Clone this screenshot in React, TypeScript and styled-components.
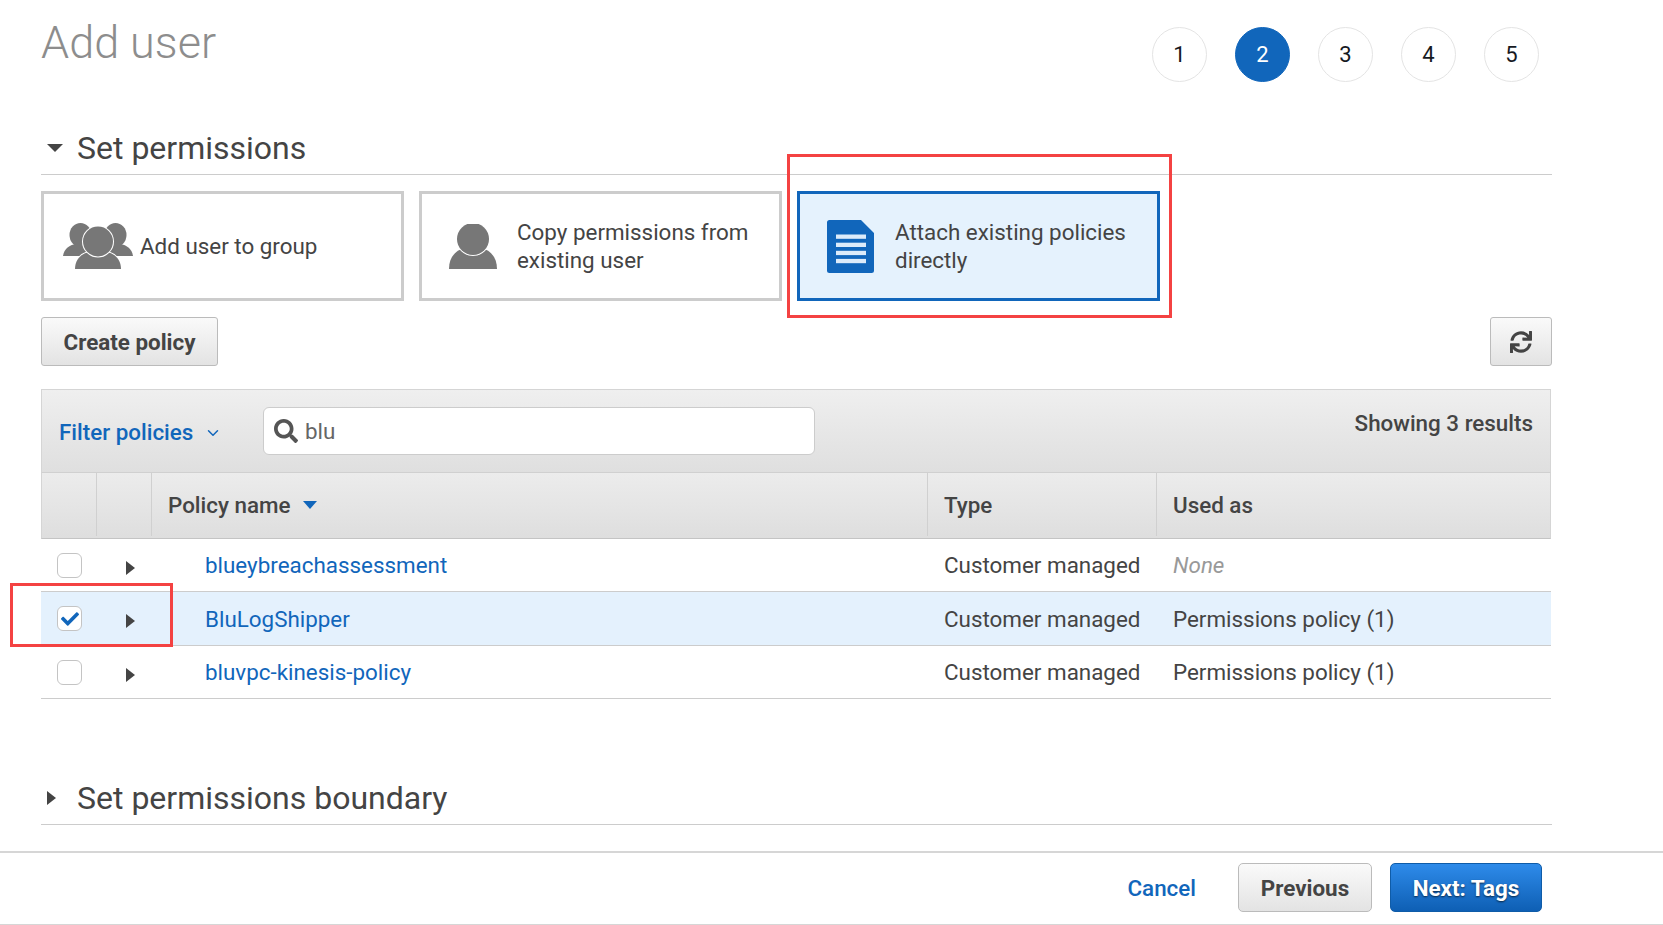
import React from "react";
import styled, { createGlobalStyle } from "styled-components";
import { FaSearch, FaSync, FaCheck } from "react-icons/fa";
import { LuChevronDown } from "react-icons/lu";

const GlobalStyle = createGlobalStyle`
  html, body {
    margin: 0;
    padding: 0;
    background: #fff;
    font-family: Roboto, "Liberation Sans", sans-serif;
    color: #444;
  }
  * { box-sizing: border-box; }
`;

const Page = styled.div`
  width: 1663px;
  height: 925px;
  overflow: hidden;
  background: #fff;
`;

const Main = styled.div`
  width: 1552px;
  padding-left: 41px;
`;

const Header = styled.header`
  display: flex;
  justify-content: space-between;
  align-items: flex-start;
  height: 82px;
`;

const Title = styled.h1`
  margin: 16px 0 0;
  font-size: 45px;
  line-height: 54px;
  font-weight: 300;
  color: #8d8d8d;
`;

const Steps = styled.ol`
  display: flex;
  gap: 28px;
  list-style: none;
  margin: 27px 13px 0 0;
  padding: 0;
`;

const Step = styled.li<{ $active?: boolean }>`
  width: 55px;
  height: 55px;
  border-radius: 50%;
  display: flex;
  align-items: center;
  justify-content: center;
  font-size: 22px;
  border: 1px solid ${(p) => (p.$active ? "#1166bb" : "#e4e4e4")};
  background: ${(p) => (p.$active ? "#1166bb" : "#fff")};
  color: ${(p) => (p.$active ? "#fff" : "#16191f")};
`;

const SectionHeading = styled.div<{ $top: number }>`
  display: flex;
  align-items: center;
  height: 51px;
  margin-top: ${(p) => p.$top}px;
  padding-bottom: 2px;
  border-bottom: 1px solid #ccc;
  font-size: 32px;
  color: #444;
`;

const SectionCaret = styled.span`
  width: 36px;
  display: flex;
  justify-content: flex-start;
  padding-left: 6px;
`;

const CaretDown = styled.i<{ $color?: string; $w?: number; $h?: number }>`
  display: block;
  width: 0;
  height: 0;
  border-left: ${(p) => p.$w ?? 8}px solid transparent;
  border-right: ${(p) => p.$w ?? 8}px solid transparent;
  border-top: ${(p) => p.$h ?? 8}px solid ${(p) => p.$color ?? "#444"};
`;

const CaretRight = styled.i`
  display: block;
  width: 0;
  height: 0;
  border-top: 7px solid transparent;
  border-bottom: 7px solid transparent;
  border-left: 9px solid #444;
`;

const Cards = styled.div`
  display: flex;
  gap: 15px;
  margin-top: 16px;
`;

const Card = styled.div<{ $selected?: boolean; $pad: number; $gap: number }>`
  position: relative;
  width: 363px;
  height: 110px;
  display: flex;
  align-items: center;
  gap: ${(p) => p.$gap}px;
  padding-left: ${(p) => p.$pad}px;
  border: 3px solid ${(p) => (p.$selected ? "#1166bb" : "#ccc")};
  background: ${(p) => (p.$selected ? "#e5f2fd" : "#fff")};
  font-size: 22.4px;
  line-height: 28px;
  color: #444;
`;

const CardText = styled.span`
  display: block;
  margin-top: -1px;
`;

const CalloutBox = styled.div`
  position: absolute;
  border: 3px solid #f44242;
  pointer-events: none;
`;

const CardCallout = styled(CalloutBox)`
  left: -13px;
  top: -40px;
  width: 385px;
  height: 164px;
`;

const RowCallout = styled(CalloutBox)`
  left: -31px;
  top: -9px;
  width: 163px;
  height: 64px;
  z-index: 2;
`;

const Actions = styled.div`
  display: flex;
  justify-content: space-between;
  margin-top: 16px;
`;

const Button = styled.button<{ $w: number }>`
  width: ${(p) => p.$w}px;
  height: 49px;
  padding: 0;
  display: flex;
  align-items: center;
  justify-content: center;
  border: 1px solid #bbb;
  border-radius: 3px;
  background: linear-gradient(#fafafa, #e3e3e3);
  font-family: inherit;
  font-size: 22.4px;
  font-weight: 700;
  color: #444;
`;

const PrimaryButton = styled(Button)`
  border: 1px solid #0f5ca8;
  border-radius: 5px;
  background: linear-gradient(#2e8bea, #0e5fb4);
  color: #fff;
  text-shadow: 0 1px 2px rgba(0, 0, 0, 0.65);
`;

const Table = styled.div`
  width: 1510px;
  margin-top: 23px;
`;

const Toolbar = styled.div`
  position: relative;
  height: 84px;
  display: flex;
  align-items: center;
  padding: 0 17px;
  border: 1px solid #d5d5d5;
  border-bottom-color: #d0d0d0;
  background: linear-gradient(#efefef, #dfdfdf);
`;

const FilterLabel = styled.span`
  display: flex;
  align-items: center;
  width: 204px;
  margin-top: 1px;
  font-size: 22.4px;
  font-weight: 500;
  color: #1166bb;
  svg { margin: 3px 0 0 11px; }
`;

const SearchBox = styled.div`
  width: 552px;
  height: 48px;
  display: flex;
  align-items: center;
  gap: 7px;
  padding-left: 10px;
  background: #fff;
  border: 1px solid #ccc;
  border-radius: 6px;
  font-size: 22.4px;
  color: #666;
`;

const ResultCount = styled.span`
  margin-left: auto;
  align-self: flex-start;
  margin-top: 20px;
  font-size: 22.4px;
  font-weight: 500;
  color: #444;
`;

const Grid = styled.div`
  display: grid;
  grid-template-columns: 55px 55px 776px 229px 1fr;
`;

const HeadRow = styled(Grid)`
  height: 66px;
  border: 1px solid #d5d5d5;
  border-top: 0;
  border-bottom-color: #c4c4c4;
  background: linear-gradient(#ececec, #dedede);
`;

const HeadCell = styled.div<{ $last?: boolean }>`
  display: flex;
  align-items: center;
  gap: 12px;
  padding-left: 16px;
  margin: 0 0 2px;
  border-right: ${(p) => (p.$last ? "0" : "1px solid #d0d0d0")};
  font-size: 22.4px;
  font-weight: 500;
  color: #444;
`;

const Row = styled(Grid)<{ $selected?: boolean; $h: number }>`
  position: relative;
  height: ${(p) => p.$h}px;
  align-items: center;
  border-bottom: 1.5px solid #ccc;
  background: ${(p) => (p.$selected ? "#e4f1fd" : "#fff")};
  font-size: 22.4px;
  color: #444;
`;

const CheckCell = styled.div`
  display: flex;
  justify-content: center;
  padding-left: 2px;
`;

const ArrowCell = styled.div`
  display: flex;
  justify-content: center;
  padding-left: 14px;
  padding-top: 5px;
`;

const Check = styled.span<{ $checked?: boolean }>`
  width: 25px;
  height: 25px;
  display: flex;
  align-items: center;
  justify-content: center;
  border: 1px solid #c4c4c4;
  border-radius: 6px;
  background: #fff;
  color: #1166bb;
  font-size: 18px;
`;

const PolicyLink = styled.a`
  padding-left: 54px;
  color: #1166bb;
`;

const TextCell = styled.span<{ $muted?: boolean }>`
  padding-left: 17px;
  color: ${(p) => (p.$muted ? "#999" : "#444")};
  font-style: ${(p) => (p.$muted ? "italic" : "normal")};
`;

const Footer = styled.footer`
  height: 75px;
  margin-top: 26px;
  display: flex;
  align-items: center;
  justify-content: flex-end;
  padding: 0 121px 2px 0;
  border-top: 2px solid #d6d6d6;
  border-bottom: 2px solid #d6d6d6;
`;

const CancelLink = styled.a`
  margin-right: 42px;
  font-size: 22.4px;
  font-weight: 500;
  color: #1166bb;
`;

const PreviousButton = styled(Button)`
  margin-right: 18px;
  border-radius: 5px;
`;

const GroupIcon = () => (
  <svg width="70" height="46" viewBox="0 0 70 46" fill="#777">
    <ellipse cx="17.5" cy="12" rx="11" ry="12" />
    <ellipse cx="52.5" cy="12" rx="11" ry="12" />
    <path d="M0 33c1-7 6-11 13-12h44c7 1 12 5 13 12H0z" />
    <g stroke="#fff" strokeWidth="2" paintOrder="stroke">
      <path d="M12 46c0-10 7-16 15-17h16c8 1 15 7 15 17H12z" />
      <circle cx="35" cy="18.5" r="15" />
    </g>
  </svg>
);

const UserIcon = () => (
  <svg width="48" height="45" viewBox="0 0 48 45" fill="#777">
    <path d="M0 45c0-11 6-19 16-21h16c10 2 16 10 16 21H0z" />
    <ellipse cx="24" cy="15" rx="16" ry="16" stroke="#fff" strokeWidth="2" paintOrder="stroke" />
  </svg>
);

const DocIcon = () => (
  <svg width="47" height="53" viewBox="0 0 47 53">
    <path d="M2.5 0H34l13 13v37.500a2.500 2.500 0 0 1-2.500 2.500h-42A2.500 2.500 0 0 1 0 50.500v-48A2.500 2.500 0 0 1 2.500 0z" fill="#1166bb" />
    <g fill="#dcebfa">
      <rect x="9" y="14.500" width="30" height="4.300" />
      <rect x="9" y="22.700" width="30" height="4.300" />
      <rect x="9" y="30.800" width="30" height="4.300" />
      <rect x="9" y="38.900" width="30" height="4.300" />
    </g>
  </svg>
);

const policies = [
  { name: "blueybreachassessment", usedAs: "None", muted: true, h: 53 },
  { name: "BluLogShipper", usedAs: "Permissions policy (1)", selected: true, h: 54 },
  { name: "bluvpc-kinesis-policy", usedAs: "Permissions policy (1)", h: 53 },
];

export default function App() {
  return (
    <Page>
      <GlobalStyle />
      <Main>
        <Header>
          <Title>Add user</Title>
          <Steps>
            {[1, 2, 3, 4, 5].map((n) => (
              <Step key={n} $active={n === 2}>{n}</Step>
            ))}
          </Steps>
        </Header>

        <SectionHeading $top={42}>
          <SectionCaret><CaretDown /></SectionCaret>
          Set permissions
        </SectionHeading>

        <Cards>
          <Card $pad={19} $gap={7}>
            <GroupIcon />
            <CardText>Add user to group</CardText>
          </Card>
          <Card $pad={27} $gap={20}>
            <UserIcon />
            <CardText>Copy permissions from<br />existing user</CardText>
          </Card>
          <Card $selected $pad={27} $gap={21}>
            <DocIcon />
            <CardText>Attach existing policies<br />directly</CardText>
            <CardCallout />
          </Card>
        </Cards>

        <Actions>
          <Button $w={177}>Create policy</Button>
          <Button $w={62}><FaSync size={22} /></Button>
        </Actions>

        <Table>
          <Toolbar>
            <FilterLabel>
              Filter policies
              <LuChevronDown size={18} strokeWidth={2} />
            </FilterLabel>
            <SearchBox>
              <FaSearch size={24} color="#555" />
              blu
            </SearchBox>
            <ResultCount>Showing 3 results</ResultCount>
          </Toolbar>
          <HeadRow>
            <HeadCell />
            <HeadCell />
            <HeadCell>
              Policy name
              <CaretDown $color="#1166bb" $w={7} $h={8} />
            </HeadCell>
            <HeadCell>Type</HeadCell>
            <HeadCell $last>Used as</HeadCell>
          </HeadRow>
          {policies.map((p) => (
            <Row key={p.name} $selected={p.selected} $h={p.h}>
              {p.selected && <RowCallout />}
              <CheckCell>
                <Check>{p.selected && <FaCheck />}</Check>
              </CheckCell>
              <ArrowCell><CaretRight /></ArrowCell>
              <PolicyLink>{p.name}</PolicyLink>
              <TextCell>Customer managed</TextCell>
              <TextCell $muted={p.muted}>{p.usedAs}</TextCell>
            </Row>
          ))}
        </Table>

        <SectionHeading $top={75}>
          <SectionCaret><CaretRight /></SectionCaret>
          Set permissions boundary
        </SectionHeading>
      </Main>

      <Footer>
        <CancelLink>Cancel</CancelLink>
        <PreviousButton $w={134}>Previous</PreviousButton>
        <PrimaryButton $w={152}>Next: Tags</PrimaryButton>
      </Footer>
    </Page>
  );
}
